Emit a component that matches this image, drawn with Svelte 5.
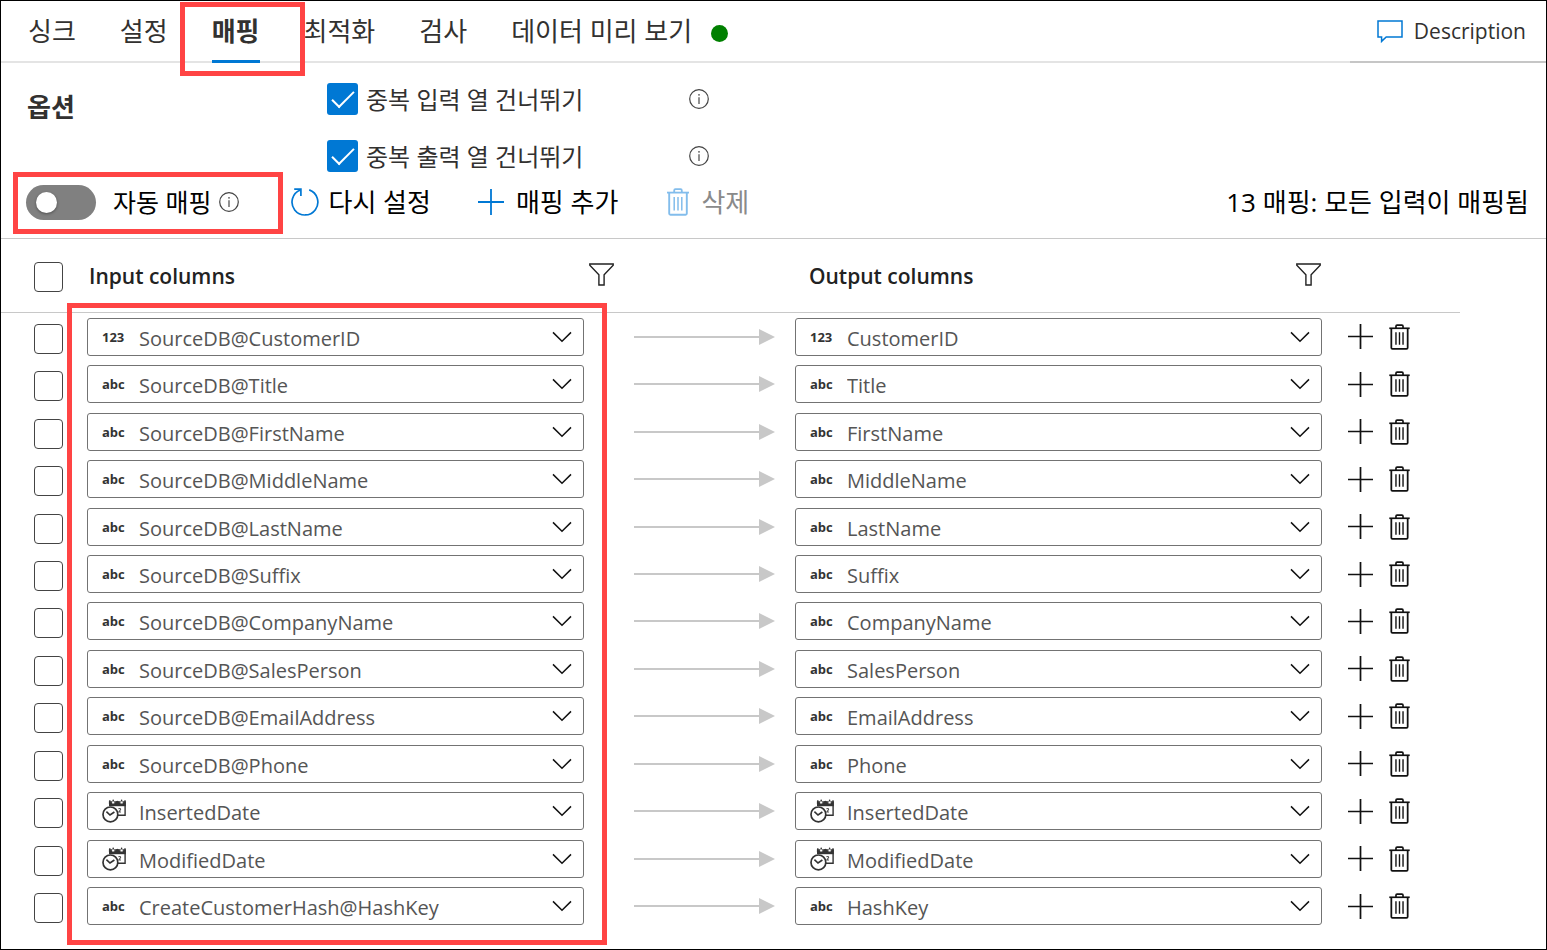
<script>
  const tabs = ['싱크', '설정', '매핑', '최적화', '검사', '데이터 미리 보기'];
  let active = $state('매핑');
  let autoMap = $state(false);

  const options = $state([
    { id: 'skip-input', label: '중복 입력 열 건너뛰기', on: true },
    { id: 'skip-output', label: '중복 출력 열 건너뛰기', on: true },
  ]);

  const mappings = [
    { type: '123', input: 'SourceDB@CustomerID', output: 'CustomerID' },
    { type: 'abc', input: 'SourceDB@Title', output: 'Title' },
    { type: 'abc', input: 'SourceDB@FirstName', output: 'FirstName' },
    { type: 'abc', input: 'SourceDB@MiddleName', output: 'MiddleName' },
    { type: 'abc', input: 'SourceDB@LastName', output: 'LastName' },
    { type: 'abc', input: 'SourceDB@Suffix', output: 'Suffix' },
    { type: 'abc', input: 'SourceDB@CompanyName', output: 'CompanyName' },
    { type: 'abc', input: 'SourceDB@SalesPerson', output: 'SalesPerson' },
    { type: 'abc', input: 'SourceDB@EmailAddress', output: 'EmailAddress' },
    { type: 'abc', input: 'SourceDB@Phone', output: 'Phone' },
    { type: 'date', input: 'InsertedDate', output: 'InsertedDate' },
    { type: 'date', input: 'ModifiedDate', output: 'ModifiedDate' },
    { type: 'abc', input: 'CreateCustomerHash@HashKey', output: 'HashKey' },
  ];
</script>

{#snippet info()}
  <svg class="info" viewBox="0 0 20 20" aria-hidden="true">
    <circle cx="10" cy="10" r="9.3" fill="none" stroke="#444" stroke-width="1.2" />
    <path d="M10 8.2V15" stroke="#555" stroke-width="1.3" />
    <circle cx="10" cy="5.8" r="0.9" fill="#555" />
  </svg>
{/snippet}

{#snippet trash()}
  <svg class="trash" viewBox="0 0 22 28" fill="none" stroke="currentColor" aria-hidden="true">
    <path d="M0 4.6H22" stroke-width="1.8" />
    <path d="M7.2 4.4V2.4Q7.2 1.2 8.4 1.2H13.6Q14.8 1.2 14.8 2.4V4.4" stroke-width="1.8" />
    <path d="M2.2 4.6V25.6Q2.2 26.8 3.4 26.8H18.6Q19.8 26.8 19.8 25.6V4.6" stroke-width="1.9" />
    <path d="M7.2 9V22.4M11 9V22.4M14.8 9V22.4" stroke-width="1.5" />
  </svg>
{/snippet}

{#snippet plus()}
  <svg class="plus" viewBox="0 0 26 26" fill="none" stroke="currentColor" aria-hidden="true">
    <path d="M0 13H26M13 0V26" stroke-width="1.8" />
  </svg>
{/snippet}

{#snippet funnel()}
  <svg class="funnel" viewBox="0 0 25 23" fill="none" stroke="#222" stroke-width="1.4" aria-hidden="true">
    <path d="M0.8 1H24.2V2.2L15.1 11.8V22H9.9V11.8L0.8 2.2Z" />
  </svg>
{/snippet}

{#snippet picker(type, value, label)}
  <div class="picker">
    <span class="type">
      {#if type === 'date'}
        <svg viewBox="0 0 24 24" aria-hidden="true">
          <path d="M7.6 5V3H23.1V16.2H15.5" fill="none" stroke="#333" stroke-width="1.4" />
          <path d="M7 3.4H23.8V7.2H7Z" fill="#333" />
          <path d="M7.8 1.2V4M23 1.2V4" stroke="#333" stroke-width="1.4" />
          <path d="M11.2 2.4V4.4M19.6 2.4V4.4" stroke="#fff" stroke-width="2.2" />
          <circle cx="11.2" cy="1.4" r="0.8" fill="#333" />
          <circle cx="15.4" cy="3.2" r="1.5" fill="#333" />
          <circle cx="19.6" cy="1.4" r="0.8" fill="#333" />
          <path d="M16.4 9.8Q18.6 8.8 18.6 10.6L16.8 13H19" fill="none" stroke="#555" stroke-width="1.1" />
          <circle cx="8.4" cy="15.4" r="7.4" fill="#fff" stroke="#333" stroke-width="1.7" />
          <path d="M4.4 12.6L8 16L12.4 13" fill="none" stroke="#333" stroke-width="1.6" />
        </svg>
      {:else}
        {type}
      {/if}
    </span>
    <select aria-label={label}><option>{value}</option></select>
    <svg class="chevron" viewBox="0 0 20 12" fill="none" stroke="#111" stroke-width="1.5" aria-hidden="true">
      <path d="M1 1.4L10 10.2L19 1.4" />
    </svg>
  </div>
{/snippet}

<div class="page">
  <header>
    <nav>
      {#each tabs as tab}
        <button class="tab" class:active={active === tab} class:marked={tab === '매핑'} onclick={() => (active = tab)}>{tab}</button>
      {/each}
      <span class="status"></span>
    </nav>
    <button class="description">
      <svg viewBox="0 0 26 23" fill="none" stroke="#0078d4" stroke-width="1.5" aria-hidden="true">
        <path d="M1 1H25V17H9.2L4.6 21.4V17H1Z" />
      </svg>
      Description
    </button>
  </header>

  <section class="options">
    <h2>옵션</h2>
    <div class="choices">
      {#each options as option}
        <div class="choice">
          <input type="checkbox" id={option.id} bind:checked={option.on} />
          <label for={option.id}>{option.label}</label>
          {@render info()}
        </div>
      {/each}
    </div>
  </section>

  <section class="toolbar">
    <div class="auto">
      <input type="checkbox" role="switch" id="auto-map" bind:checked={autoMap} />
      <label for="auto-map">자동 매핑</label>
      {@render info()}
    </div>
    <button class="reset">
      <svg viewBox="0 0 28 28" fill="none" stroke="#0078d4" stroke-width="1.7" aria-hidden="true">
        <path d="M18.2 1.9A12.9 12.9 0 1 1 9.4 2" />
        <path d="M3.2 1.2H9.9V8" />
      </svg>
      다시 설정
    </button>
    <button class="add">{@render plus()}매핑 추가</button>
    <button class="delete" disabled>{@render trash()}삭제</button>
    <p>13 매핑: 모든 입력이 매핑됨</p>
  </section>

  <table>
    <thead>
      <tr>
        <th class="check"><input type="checkbox" aria-label="Select all" /></th>
        <th class="title">Input columns <button aria-label="Filter input columns">{@render funnel()}</button></th>
        <th class="title out">Output columns <button aria-label="Filter output columns">{@render funnel()}</button></th>
      </tr>
    </thead>
    <tbody>
      {#each mappings as row}
        <tr>
          <td class="check"><input type="checkbox" aria-label={row.input} /></td>
          <td>{@render picker(row.type, row.input, 'Input column')}</td>
          <td class="arrow"></td>
          <td>{@render picker(row.type, row.output, 'Output column')}</td>
          <td class="actions">
            <button aria-label="Add">{@render plus()}</button>
            <button aria-label="Delete">{@render trash()}</button>
          </td>
        </tr>
      {/each}
    </tbody>
  </table>
</div>

<style>
  :global(body) {
    margin: 0;
    background: #fff;
  }

  .page {
    --mark: 5px solid #ff4444;
    --blue: #0078d4;
    box-sizing: border-box;
    min-height: 100vh;
    display: flex;
    flex-direction: column;
    padding-bottom: 19px;
    border: 1px solid #000;
    color: #323130;
    font-family: 'Open Sans', 'Noto Sans CJK KR', sans-serif;
    font-size: 24px;
    line-height: 32px;
  }

  .page :global(*) {
    box-sizing: border-box;
  }

  svg {
    display: block;
    flex: none;
  }

  button {
    display: flex;
    align-items: center;
    padding: 0;
    border: 0;
    background: none;
    color: inherit;
    font: inherit;
    white-space: nowrap;
    cursor: pointer;
  }

  input {
    flex: none;
    margin: 0;
    appearance: none;
  }

  header {
    display: flex;
    justify-content: space-between;
    height: 62px;
  }

  nav {
    flex: 1;
    display: flex;
    gap: 44px;
    padding-left: 27px;
    border-bottom: 2px solid #e4e4e4;
  }

  .tab {
    position: relative;
    font-size: 26px;
  }

  .tab.active {
    font-weight: 700;
  }

  .tab.active::before {
    content: '';
    position: absolute;
    inset: auto 0 -2px;
    height: 3px;
    background: var(--blue);
  }

  .tab.marked::after {
    content: '';
    position: absolute;
    z-index: 2;
    inset: 1px -45px -15px -32px;
    border: var(--mark);
    pointer-events: none;
  }

  .status {
    align-self: center;
    width: 17px;
    height: 17px;
    margin: 4px 0 0 -25px;
    border-radius: 50%;
    background: #008000;
  }

  .description {
    gap: 11px;
    padding: 0 20px 0 27px;
    border-bottom: 2px solid #c6c6c6;
    font-size: 21px;
  }

  .description svg {
    width: 26px;
    height: 23px;
  }

  .options {
    display: flex;
    padding: 20px 26px 1px;
  }

  h2 {
    width: 300px;
    margin: 0;
    font-size: 26px;
    line-height: 48px;
  }

  .choices {
    display: grid;
    gap: 25px;
  }

  .choice {
    display: flex;
    align-items: center;
    height: 32px;
  }

  .choice input {
    width: 31px;
    height: 32px;
    border: 1px solid #666;
    border-radius: 3px;
  }

  .choice input:checked {
    border: 0;
    background: var(--blue);
  }

  .choice input:checked::before {
    content: '';
    display: block;
    width: 20px;
    height: 9px;
    margin: 8px 0 0 5px;
    border: solid #fff;
    border-width: 0 0 2px 2px;
    transform: rotate(-45deg);
  }

  .choice label {
    width: 331px;
    padding: 2px 0 0 8px;
  }

  .info {
    width: 20px;
    height: 20px;
  }

  .toolbar {
    display: flex;
    align-items: center;
    height: 66px;
    padding: 0 17px 7px 25px;
    border-bottom: 1px solid #c8c8c8;
    color: #000;
    font-size: 26px;
  }

  .auto {
    position: relative;
    display: flex;
    align-items: center;
  }

  .auto::after {
    content: '';
    position: absolute;
    inset: -13px -44px -14px -13px;
    border: var(--mark);
    pointer-events: none;
  }

  .auto input {
    width: 70px;
    height: 35px;
    padding: 7px 10px;
    border-radius: 18px;
    background: #808080;
  }

  .auto input::before {
    content: '';
    display: block;
    width: 21px;
    height: 21px;
    border-radius: 50%;
    background: #fff;
    box-shadow: 0 1px 3px #0006;
  }

  .auto input:checked {
    padding-left: 39px;
    background: var(--blue);
  }

  .auto label {
    padding: 0 7px 0 17px;
    font-size: 25px;
  }

  .toolbar button {
    gap: 12px;
  }

  .toolbar .reset {
    gap: 10px;
    margin-left: 52px;
  }

  .reset svg {
    width: 28px;
    height: 28px;
  }

  .add {
    margin-left: 47px;
  }

  .plus {
    width: 26px;
    height: 26px;
  }

  .add .plus {
    color: var(--blue);
  }

  .delete {
    margin-left: 49px;
    color: #8a8a8a;
  }

  .trash {
    width: 22px;
    height: 28px;
  }

  .delete .trash {
    color: #83bdec;
  }

  p {
    margin: 0 0 0 auto;
  }

  table {
    flex: 1;
    display: flex;
    flex-direction: column;
    margin-right: 86px;
  }

  tr {
    display: grid;
    grid-template-columns:
      [check] 29px 24px [input] minmax(0, 497fr) 50px [arrow] 141px 20px
      [output] minmax(0, 527fr) 26px [actions] 62px;
    align-items: center;
    padding: 0 50px 0 33px;
  }

  thead tr {
    height: 74px;
    padding-top: 3px;
    border-bottom: 1px solid #c8c8c8;
  }

  tbody {
    flex: 1;
    display: grid;
    grid-auto-rows: 1fr;
  }

  td,
  th {
    padding: 0;
  }

  td:nth-child(2),
  th:nth-child(2) {
    grid-column: input;
  }

  td:nth-child(3) {
    grid-column: arrow;
  }

  td:nth-child(4),
  th:nth-child(3) {
    grid-column: output;
  }

  td:nth-child(5) {
    grid-column: actions;
  }

  tbody tr:first-child {
    position: relative;
  }

  tbody tr:first-child::after {
    content: '';
    position: absolute;
    z-index: 2;
    grid-column: input;
    top: -10px;
    left: -20px;
    right: -23px;
    box-sizing: border-box;
    height: calc(1300% + 25px);
    border: var(--mark);
    pointer-events: none;
  }

  .check input {
    display: block;
    width: 29px;
    height: 30px;
    border: 1px solid #444;
    border-radius: 4px;
  }

  td.check {
    padding-top: 4px;
  }

  .check input:checked {
    background: var(--blue);
  }

  .title {
    display: flex;
    justify-content: space-between;
    align-items: center;
    padding: 0 0 2px 2px;
    color: #222;
    font-size: 21px;
    font-weight: 600;
    text-align: left;
  }

  .title button {
    margin: -3px -30px 0 0;
  }

  .title.out {
    padding-left: 14px;
  }

  .title.out button {
    margin-right: 1px;
  }

  .funnel {
    width: 25px;
    height: 23px;
  }

  .picker {
    position: relative;
  }

  .type {
    position: absolute;
    inset: 0 auto 0 15px;
    display: flex;
    align-items: center;
    color: #333;
    font-size: 13px;
    font-weight: 700;
    pointer-events: none;
  }

  .type svg {
    width: 24px;
    height: 24px;
  }

  select {
    display: block;
    width: 100%;
    height: 38px;
    padding: 4px 50px 0 51px;
    border: 1px solid #737373;
    border-radius: 3px;
    background: none;
    color: #555;
    font: inherit;
    font-size: 20px;
    appearance: none;
  }

  .chevron {
    position: absolute;
    top: 13px;
    right: 12px;
    width: 20px;
    height: 12px;
    pointer-events: none;
  }

  .arrow {
    display: flex;
    align-items: center;
  }

  .arrow::before {
    content: '';
    flex: 1;
    height: 2px;
    background: #c8c8c8;
  }

  .arrow::after {
    content: '';
    border: solid transparent;
    border-width: 8px 0 8px 16px;
    border-left-color: #c8c8c8;
  }

  .actions {
    display: flex;
    align-items: center;
    gap: 16px;
    color: #111;
  }

  .actions .plus {
    width: 25px;
    height: 25px;
  }

  .actions .trash {
    width: 21px;
    height: 26px;
  }
</style>
